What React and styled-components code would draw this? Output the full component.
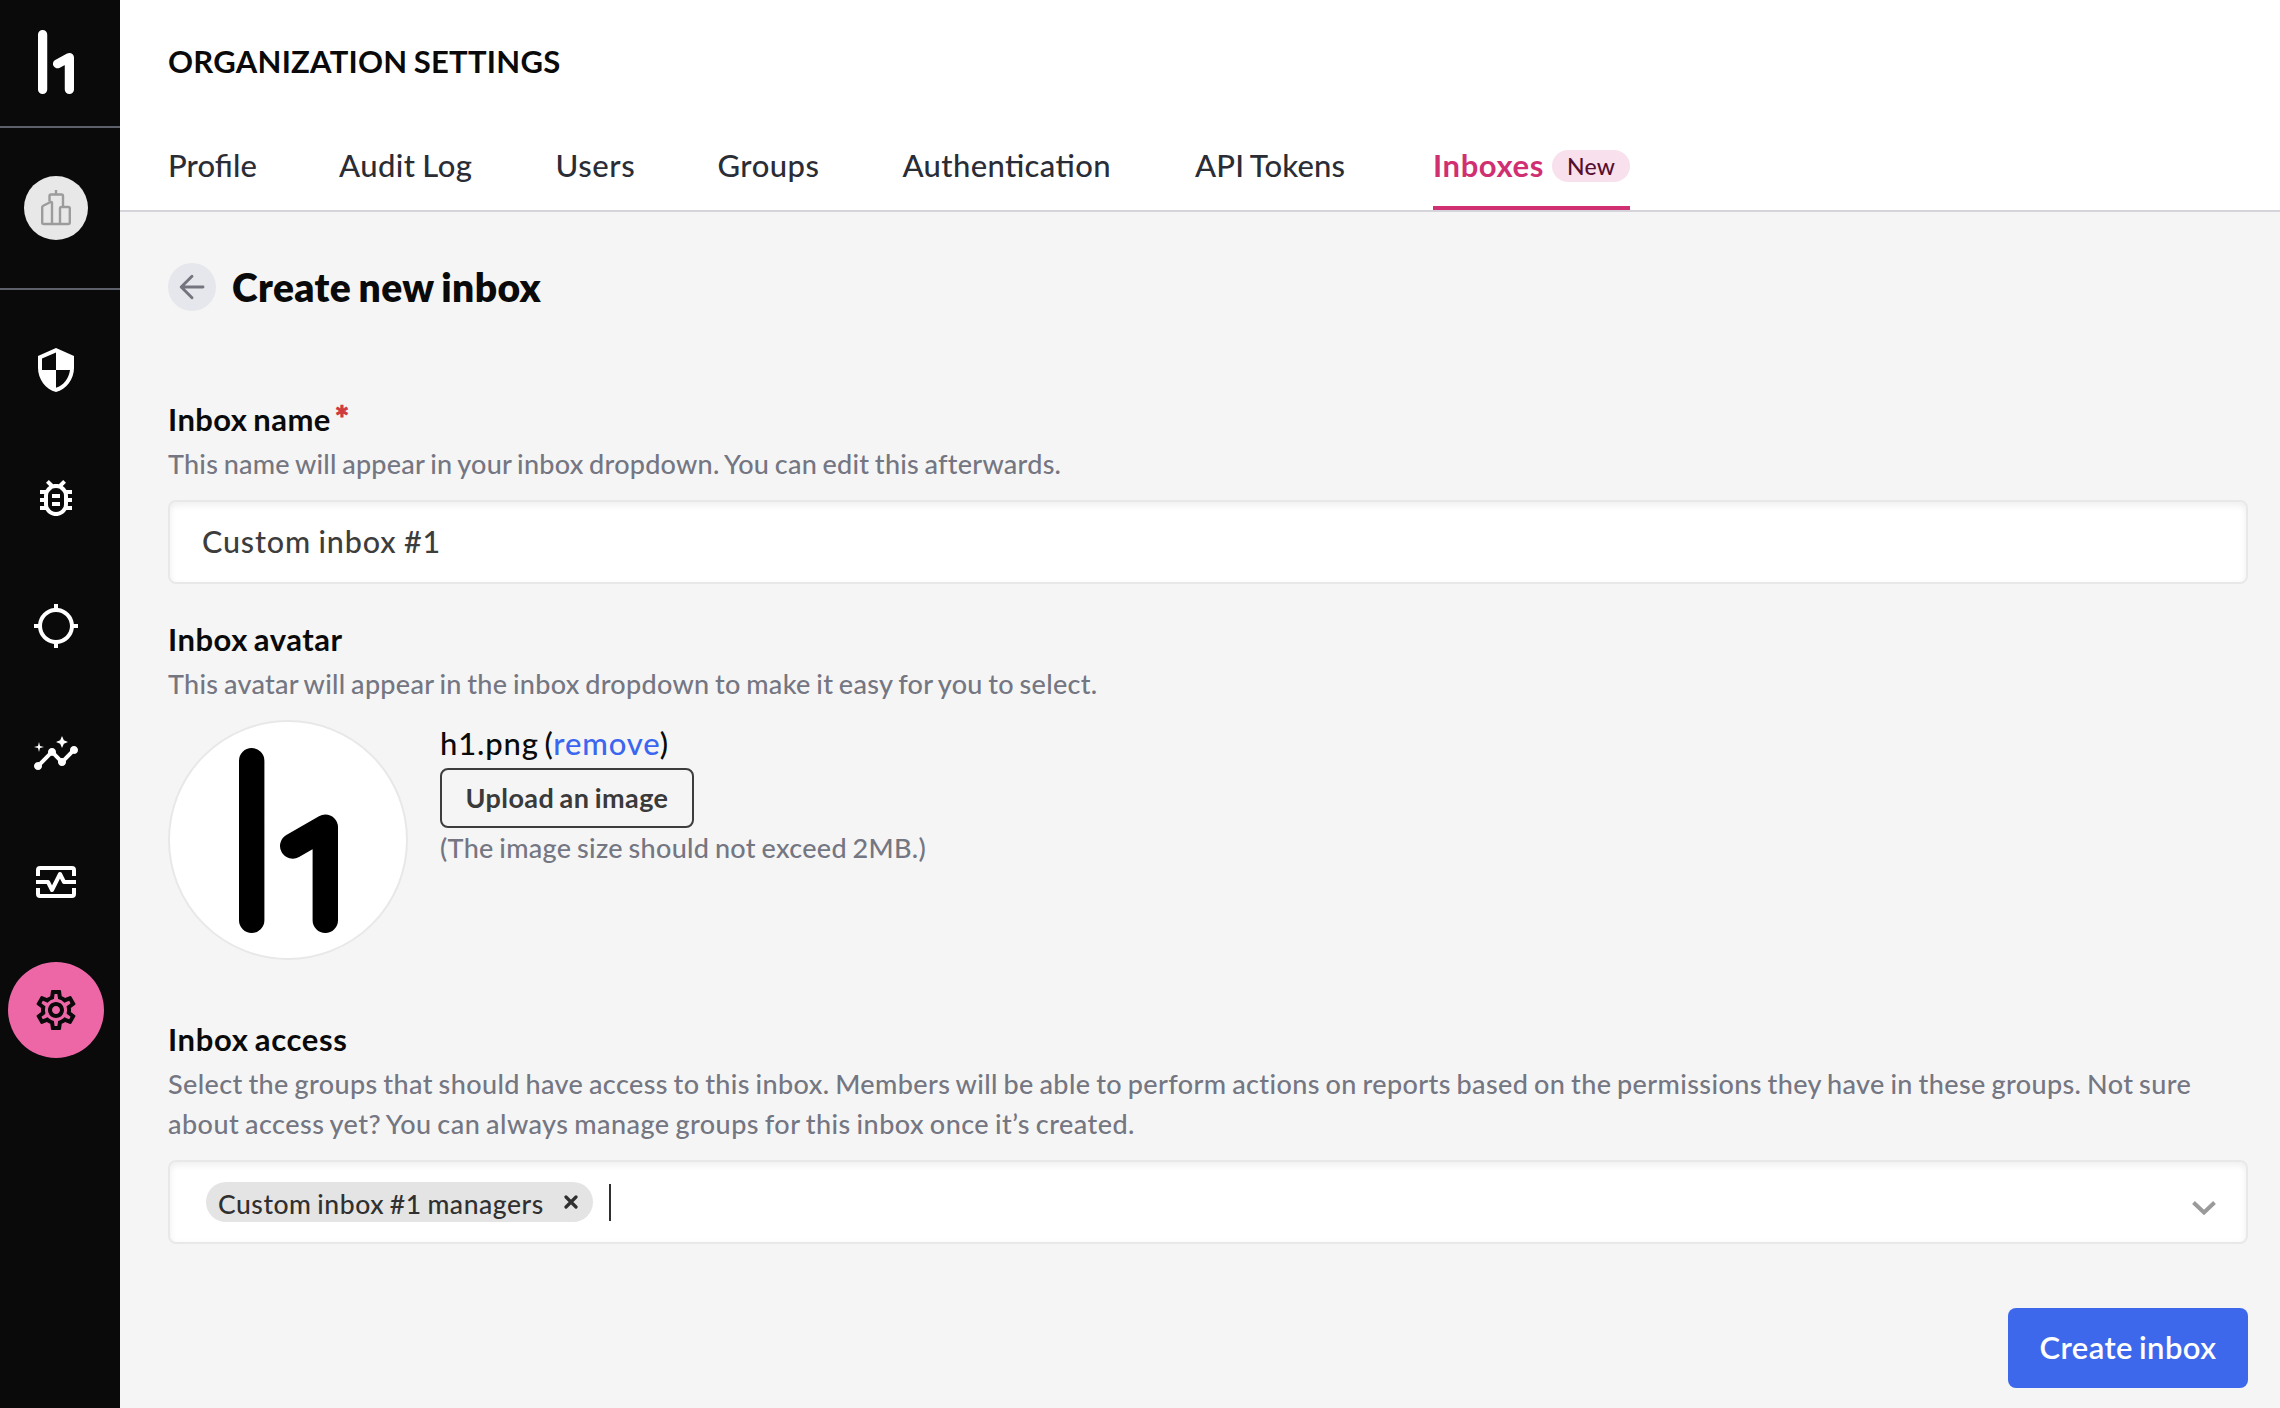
import React from "react";
import styled, { createGlobalStyle } from "styled-components";
import {
  MdSecurity,
  MdOutlineBugReport,
  MdLocationSearching,
  MdInsights,
  MdOutlineSettings,
} from "react-icons/md";

const GlobalStyle = createGlobalStyle`
  *, *::before, *::after { box-sizing: border-box; }
  body { margin: 0; background: #f5f5f5; }
  button, input { font: inherit; }
`;

const Page = styled.div`
  display: flex;
  width: 100%;
  height: 1408px;
  overflow: hidden;
  background: #f5f5f5;
  color: #0a0a0a;
  font-family: Lato, "Noto Sans", sans-serif;
  font-weight: 500;
`;

/* ---------- Sidebar ---------- */

const Sidebar = styled.aside`
  flex: 0 0 120px;
  display: flex;
  flex-direction: column;
  background: #0a0a0a;
`;

const SidebarSection = styled.div`
  height: ${(p) => p.$height}px;
  padding: ${(p) => p.$top}px 8px 0 0;
  border-bottom: 2px solid #5d5f6b;
  display: flex;
  justify-content: center;
  align-items: flex-start;
`;

const OrgAvatar = styled.div`
  width: 64px;
  height: 64px;
  border-radius: 50%;
  background: #e8e8e8;
  display: flex;
  align-items: center;
  justify-content: center;
`;

const Nav = styled.nav`
  display: flex;
  flex-direction: column;
  gap: 32px;
  padding: 32px 8px 0 0;
  align-items: center;
`;

const NavItem = styled.a`
  width: 96px;
  height: 96px;
  border-radius: 50%;
  display: flex;
  align-items: center;
  justify-content: center;
  background: ${(p) => (p.$active ? "#ed67a6" : "transparent")};
  color: ${(p) => (p.$active ? "#0a0a0a" : "#fff")};
`;

/* ---------- Header ---------- */

const Content = styled.div`
  flex: 1;
  display: flex;
  flex-direction: column;
`;

const Header = styled.header`
  height: 212px;
  padding: 41px 48px 0;
  background: #fff;
  border-bottom: 2px solid #d4d4da;
`;

const HeaderTitle = styled.div`
  font-size: 31px;
  line-height: 40px;
  font-weight: 700;
  letter-spacing: 0.26px;
  word-spacing: -1.5px;
`;

const Tabs = styled.div`
  display: flex;
  margin-top: 64px;
  height: 65px;
`;

const Tab = styled.a`
  flex: 0 0 ${(p) => p.$width}px;
  font-size: 31px;
  line-height: 40px;
  letter-spacing: ${(p) => p.$spacing}px;
  word-spacing: -1.5px;
  font-feature-settings: "liga" 1;
  color: #2a2d36;
  white-space: nowrap;
`;

const ActiveTab = styled(Tab)`
  display: flex;
  justify-content: space-between;
  color: #d03072;
  font-weight: 700;
  border-bottom: 4px solid #d03072;
`;

const Badge = styled.span`
  width: 78px;
  height: 32px;
  margin-top: 5px;
  border-radius: 16px;
  background: #f9e0ed;
  color: #560f2d;
  font-size: 23px;
  line-height: 32px;
  font-weight: 500;
  letter-spacing: 0.2px;
  text-align: center;
`;

/* ---------- Form ---------- */

const Form = styled.main`
  display: flex;
  flex-direction: column;
  padding: 51px 32px 0 48px;
`;

const TitleRow = styled.div`
  display: flex;
  align-items: center;
  gap: 16px;
  height: 48px;
  margin-bottom: 88px;
`;

const BackButton = styled.a`
  width: 48px;
  height: 48px;
  border-radius: 50%;
  background: #e6e7ec;
  display: flex;
  align-items: center;
  justify-content: center;
`;

const Title = styled.h1`
  margin: 0;
  font-size: 39px;
  line-height: 48px;
  font-weight: 800;
  letter-spacing: 0.4px;
  word-spacing: -2px;
`;

const Field = styled.section`
  display: flex;
  flex-direction: column;
  margin-bottom: ${(p) => p.$after}px;
`;

const Label = styled.label`
  font-size: 31px;
  line-height: 40px;
  font-weight: 700;
  letter-spacing: ${(p) => p.$spacing}px;
  word-spacing: -2px;
`;

const Required = styled.span`
  margin-left: 4px;
  color: #cf3a3d;
  font-size: 34px;
  font-weight: 900;
  line-height: 1;
  -webkit-text-stroke: 0.8px #cf3a3d;
`;

const Hint = styled.p`
  margin: ${(p) => (p.$tight ? "1px 0 0" : "5px 0 16px")};
  font-size: 27px;
  line-height: ${(p) => (p.$tight ? 37 : 40)}px;
  letter-spacing: ${(p) => p.$spacing}px;
  word-spacing: -1.5px;
  color: #747682;
  white-space: nowrap;
`;

const HintLine = styled.span`
  display: block;
  letter-spacing: ${(p) => p.$spacing}px;
`;

const Box = styled.div`
  display: flex;
  align-items: center;
  height: 84px;
  border: 2px solid #e8e8e8;
  border-radius: 8px;
  background: #fff;
  box-shadow: inset 0 3px 7px rgba(0, 0, 0, 0.07);
`;

const TextInput = styled.input`
  flex: 1;
  height: 78px;
  padding: 0 32px 3px 32px;
  border: 0;
  outline: 0;
  background: transparent;
  color: #3d3d3d;
  font-size: 30.5px;
  letter-spacing: 0.85px;
  word-spacing: -1px;
`;

const UploadRow = styled.div`
  display: flex;
  gap: 32px;
`;

const AvatarPreview = styled.div`
  width: 240px;
  height: 240px;
  border-radius: 50%;
  border: 2px solid #e8e8e8;
  background: #fff;
  padding: 26px 0 0 69px;
`;

const UploadInfo = styled.div`
  display: flex;
  flex-direction: column;
  align-items: flex-start;
  padding-top: 3px;
`;

const FileName = styled.div`
  font-size: 31px;
  line-height: 40px;
  letter-spacing: 0.85px;
  word-spacing: -3px;
`;

const Link = styled.a`
  color: #3c66ef;
`;

const OutlineButton = styled.button`
  width: 254px;
  height: 60px;
  margin-top: 5px;
  padding: 0 0 1px;
  border: 2px solid #3d3d3d;
  border-radius: 8px;
  background: transparent;
  color: #3a3a3a;
  font-size: 27px;
  font-weight: 700;
  letter-spacing: 0.4px;
  word-spacing: -1.5px;
`;

const Tag = styled.span`
  display: flex;
  align-items: center;
  width: 387px;
  height: 40px;
  margin-left: 36px;
  padding-left: 12px;
  border-radius: 20px;
  background: #e4e4e4;
  color: #303030;
  font-size: 26.5px;
  line-height: 40px;
  letter-spacing: 0.55px;
  word-spacing: -1.5px;
  white-space: nowrap;
`;

const TagText = styled.span`
  padding-top: 3px;
`;

const RemoveIcon = styled.svg`
  margin: 0 15px 0 auto;
`;

const Caret = styled.span`
  width: 2px;
  height: 37px;
  margin-left: 16px;
  background: #303030;
`;

const Chevron = styled.svg`
  margin: 12px 30px 0 auto;
`;

const PrimaryButton = styled.button`
  align-self: flex-end;
  width: 240px;
  height: 80px;
  padding: 0 0 2px;
  border: 0;
  border-radius: 8px;
  background: #3e68eb;
  color: #fff;
  font-size: 31px;
  font-weight: 600;
  letter-spacing: 0.4px;
  word-spacing: -2px;
`;

const Logo = ({ width, height, color }) => (
  <svg width={width} height={height} viewBox="0 0 99 185" preserveAspectRatio="none">
    <path
      d="M12.700 12.700V172.300M86.300 172.300V79.200L53.700 98"
      fill="none"
      stroke={color}
      strokeWidth="25.400"
      strokeLinecap="round"
      strokeLinejoin="round"
    />
  </svg>
);

const BuildingIcon = () => (
  <svg width="30" height="36" viewBox="0 0 30 36" fill="none" stroke="#9c9c9c" strokeWidth="2.400" strokeLinejoin="round">
    <path d="M15 0v4M8.500 11.500V6a1.500 1.500 0 0 1 1.500-1.500h10.500a1.500 1.500 0 0 1 1.500 1.500V16" />
    <path d="M11 34V13a1 1 0 0 0-1.400-1L2.200 15.800a1.600 1.600 0 0 0-1 1.500V32.500A1.500 1.500 0 0 0 2.700 34h24.600a1.500 1.500 0 0 0 1.500-1.500V18.500a1.500 1.500 0 0 0-1.500-1.500h-6.800a1.500 1.500 0 0 0-1.500 1.500V34" />
  </svg>
);

const MonitorIcon = () => (
  <svg width="48" height="48" viewBox="0 0 24 24" fill="none" stroke="currentColor" strokeWidth="2">
    <path d="M3 9V6a1 1 0 0 1 1-1h16a1 1 0 0 1 1 1v3M3 15v3a1 1 0 0 0 1 1h16a1 1 0 0 0 1-1v-3" />
    <path d="M2 12h6l2 4 4-8 2 4h6" strokeLinejoin="round" />
  </svg>
);

export default function App() {
  return (
    <Page>
      <GlobalStyle />
      <Sidebar>
        <SidebarSection $height={128} $top={30}>
          <Logo width={36} height={64} color="#fff" />
        </SidebarSection>
        <SidebarSection $height={162} $top={48}>
          <OrgAvatar>
            <BuildingIcon />
          </OrgAvatar>
        </SidebarSection>
        <Nav>
          <NavItem><MdSecurity size={48} /></NavItem>
          <NavItem><MdOutlineBugReport size={48} /></NavItem>
          <NavItem><MdLocationSearching size={48} /></NavItem>
          <NavItem><MdInsights size={48} /></NavItem>
          <NavItem><MonitorIcon /></NavItem>
          <NavItem $active><MdOutlineSettings size={48} /></NavItem>
        </Nav>
      </Sidebar>

      <Content>
        <Header>
          <HeaderTitle>ORGANIZATION SETTINGS</HeaderTitle>
          <Tabs>
            <Tab $width={171} $spacing={0.1}>Profile</Tab>
            <Tab $width={216.5} $spacing={0.45}>Audit Log</Tab>
            <Tab $width={162} $spacing={0.6}>Users</Tab>
            <Tab $width={185} $spacing={0.5}>Groups</Tab>
            <Tab $width={292.5} $spacing={0.37}>Authentication</Tab>
            <Tab $width={238} $spacing={0.15}>API Tokens</Tab>
            <ActiveTab $width={197} $spacing={0.6}>
              Inboxes
              <Badge>New</Badge>
            </ActiveTab>
          </Tabs>
        </Header>

        <Form>
          <TitleRow>
            <BackButton>
              <svg width="26" height="26" viewBox="0 0 26 26" fill="none" stroke="#74747f" strokeWidth="2.900" strokeLinecap="round" strokeLinejoin="round">
                <path d="M24 13H2.500M13 2.200L2.200 13 13 23.800" />
              </svg>
            </BackButton>
            <Title>Create new inbox</Title>
          </TitleRow>

          <Field $after={35}>
            <Label $spacing={0.42}>
              Inbox name<Required>*</Required>
            </Label>
            <Hint $spacing={0.24}>This name will appear in your inbox dropdown. You can edit this afterwards.</Hint>
            <Box>
              <TextInput defaultValue="Custom inbox #1" />
            </Box>
          </Field>

          <Field $after={59}>
            <Label $spacing={0.5}>Inbox avatar</Label>
            <Hint $spacing={0.29}>This avatar will appear in the inbox dropdown to make it easy for you to select.</Hint>
            <UploadRow>
              <AvatarPreview>
                <Logo width={99} height={185} color="#000" />
              </AvatarPreview>
              <UploadInfo>
                <FileName>
                  h1.png (<Link>remove</Link>)
                </FileName>
                <OutlineButton>Upload an image</OutlineButton>
                <Hint $tight $spacing={0.31}>(The image size should not exceed 2MB.)</Hint>
              </UploadInfo>
            </UploadRow>
          </Field>

          <Field $after={64}>
            <Label $spacing={0.66}>Inbox access</Label>
            <Hint $spacing={0.388}>
              Select the groups that should have access to this inbox. Members will be able to perform actions on
              reports based on the permissions they have in these groups. Not sure
              <HintLine $spacing={0.46}>
                about access yet? You can always manage groups for this inbox once it’s created.
              </HintLine>
            </Hint>
            <Box>
              <Tag>
                <TagText>Custom inbox #1 managers</TagText>
                <RemoveIcon width="14" height="14" viewBox="0 0 14 14" stroke="#303030" strokeWidth="3.200" strokeLinecap="round">
                  <path d="M2 2l10 10M12 2L2 12" />
                </RemoveIcon>
              </Tag>
              <Caret />
              <Chevron width="24" height="14" viewBox="0 0 24 14" fill="none" stroke="#9a9a9a" strokeWidth="4">
                <path d="M1.500 1.500L12 11.500 22.500 1.500" />
              </Chevron>
            </Box>
          </Field>

          <PrimaryButton>Create inbox</PrimaryButton>
        </Form>
      </Content>
    </Page>
  );
}
